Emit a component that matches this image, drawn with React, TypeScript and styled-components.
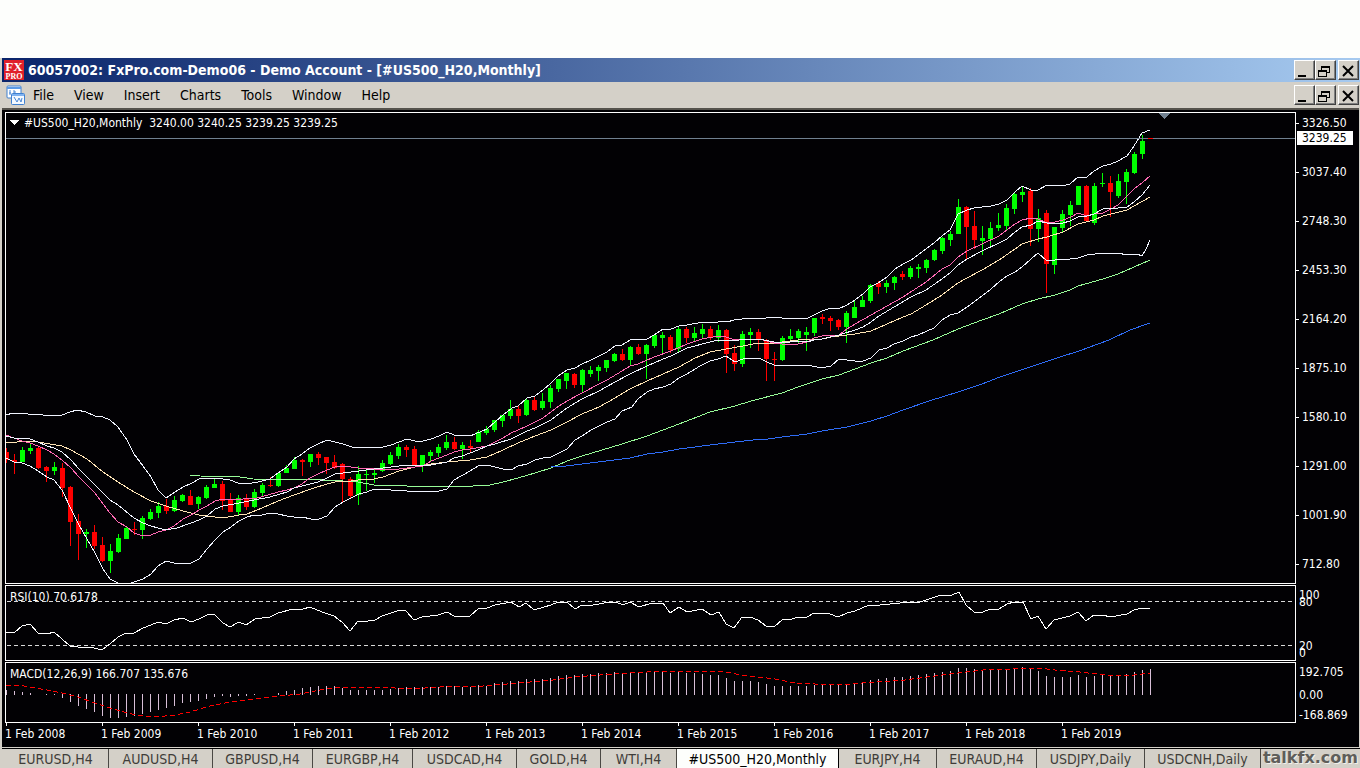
import React from "react";
import styled, { createGlobalStyle } from "styled-components";

const UI_FONT = '"DejaVu Sans Condensed", "Noto Sans", sans-serif';

const GlobalStyle = createGlobalStyle`
  * { box-sizing: border-box; }
  body { margin: 0; background: #fdfefc; font-family: ${UI_FONT}; font-size: 14px; }
  ul, ol, h1, p { margin: 0; padding: 0; list-style: none; }
`;

/* ---------- data ---------- */

const STEP = 8;
const FIRST_X = 6;

type Candle = [high: number, top: number, bottom: number, low: number, dir: 0 | 1];

const candles: Candle[] = [
  [448, 452, 460, 463, 0], [454, 460, 462, 474, 0], [447, 450, 462, 462, 1], [443, 448, 451, 454, 1],
  [446, 448, 468, 469, 0], [466, 467, 471, 482, 0], [462, 467, 471, 475, 1], [463, 468, 488, 497, 0],
  [486, 487, 522, 546, 0], [514, 521, 534, 560, 0], [529, 532, 534, 548, 1], [525, 532, 546, 549, 0],
  [537, 545, 561, 562, 0], [544, 551, 561, 573, 1], [534, 538, 552, 553, 1], [526, 528, 539, 539, 1],
  [522, 529, 530, 535, 0], [516, 518, 530, 539, 1], [509, 512, 519, 520, 1], [502, 506, 513, 518, 1],
  [499, 506, 511, 514, 0], [496, 500, 511, 512, 1], [494, 495, 501, 502, 1], [490, 496, 505, 505, 0],
  [496, 497, 504, 509, 1], [485, 487, 498, 499, 1], [479, 484, 488, 488, 1], [481, 484, 501, 510, 0],
  [493, 500, 512, 512, 0], [495, 498, 512, 515, 1], [494, 498, 507, 510, 0], [489, 492, 507, 508, 1],
  [483, 485, 493, 496, 1], [477, 485, 486, 487, 0], [472, 473, 486, 487, 1], [465, 468, 473, 473, 1],
  [457, 460, 469, 469, 1], [459, 460, 462, 476, 0], [454, 454, 462, 467, 1], [452, 454, 458, 465, 0],
  [457, 457, 463, 474, 0], [455, 462, 468, 469, 0], [463, 464, 479, 503, 0], [477, 479, 496, 498, 0],
  [466, 474, 495, 505, 1], [469, 474, 475, 491, 1], [469, 473, 475, 483, 1], [460, 463, 471, 472, 1],
  [452, 455, 464, 465, 1], [444, 447, 456, 459, 1], [445, 447, 450, 457, 0], [446, 449, 465, 466, 0],
  [455, 455, 466, 472, 1], [450, 452, 456, 461, 1], [444, 447, 453, 457, 1], [435, 442, 448, 450, 1],
  [437, 442, 449, 450, 0], [442, 445, 449, 459, 1], [440, 446, 448, 452, 0], [430, 432, 442, 442, 1],
  [426, 429, 433, 435, 1], [420, 420, 430, 432, 1], [415, 415, 421, 427, 1], [400, 409, 416, 419, 1],
  [406, 409, 416, 423, 0], [398, 400, 415, 416, 1], [396, 400, 410, 411, 0], [393, 401, 408, 410, 1],
  [385, 388, 402, 408, 1], [379, 379, 389, 392, 1], [373, 373, 381, 389, 1], [373, 374, 385, 388, 0],
  [369, 370, 385, 393, 1], [366, 370, 374, 377, 1], [365, 367, 371, 381, 1], [360, 360, 368, 372, 1],
  [353, 354, 361, 362, 1], [349, 354, 360, 361, 0], [346, 347, 360, 366, 1], [344, 347, 354, 355, 0],
  [344, 345, 354, 379, 1], [334, 335, 346, 348, 1], [332, 335, 338, 353, 1], [335, 337, 350, 353, 0],
  [327, 329, 349, 352, 1], [327, 329, 338, 343, 0], [327, 333, 338, 342, 1], [324, 329, 334, 338, 1],
  [326, 329, 338, 340, 0], [325, 330, 338, 342, 1], [329, 330, 354, 373, 0], [345, 353, 364, 371, 0],
  [331, 334, 364, 367, 1], [328, 332, 335, 348, 1], [329, 332, 339, 351, 0], [339, 340, 359, 381, 0],
  [352, 359, 360, 381, 0], [336, 338, 360, 361, 1], [329, 336, 339, 342, 1], [329, 331, 338, 344, 1],
  [327, 332, 335, 351, 1], [318, 318, 333, 336, 1], [314, 317, 319, 324, 0], [316, 318, 321, 331, 0],
  [319, 320, 327, 330, 0], [311, 313, 327, 343, 1], [301, 307, 318, 318, 1], [296, 300, 307, 307, 1],
  [284, 285, 301, 303, 1], [281, 283, 287, 294, 0], [280, 283, 287, 293, 1], [276, 277, 283, 290, 1],
  [271, 274, 277, 280, 0], [266, 268, 277, 279, 1], [264, 267, 269, 278, 1], [259, 260, 268, 273, 1],
  [249, 250, 260, 261, 1], [237, 238, 251, 254, 1], [231, 234, 240, 246, 1], [199, 207, 234, 234, 1],
  [206, 207, 227, 259, 0], [211, 226, 240, 249, 0], [226, 238, 241, 255, 1], [222, 228, 239, 247, 1],
  [213, 225, 228, 231, 1], [204, 208, 226, 230, 1], [193, 194, 209, 214, 1], [187, 192, 195, 202, 1],
  [188, 191, 229, 246, 0], [209, 218, 229, 242, 1], [210, 213, 264, 293, 0], [227, 227, 265, 274, 1],
  [210, 214, 228, 233, 1], [201, 205, 215, 226, 1], [186, 186, 205, 205, 1], [185, 186, 221, 222, 0],
  [183, 186, 223, 225, 1], [173, 183, 184, 187, 1], [176, 183, 192, 217, 0], [174, 181, 196, 198, 1],
  [169, 172, 182, 204, 1], [152, 154, 173, 174, 1], [135, 141, 154, 159, 1], [138, 138, 139, 139, 0],
];

const upperBand = "6,415 13,413 25,413 28,414 43,415 55,416 62,415 70,412 77,410 86,412 95,416 103,417 110,420 118,427 127,440 134,454 143,466 151,477 158,490 166,498 175,492 183,487 192,483 199,479 207,478 215,478 223,479 230,480 238,483 247,484 258,482 270,479 278,473 287,467 294,459 302,454 310,448 318,444 327,440 335,442 343,444 352,447 367,447 374,448 383,447 391,445 399,442 407,439 415,441 423,441 431,439 439,436 447,432 454,435 470,436 475,434 487,429 495,422 503,415 512,408 518,406 527,398 535,396 543,390 550,384 558,376 567,370 575,368 582,364 591,360 599,356 607,352 615,346 622,345 630,340 647,339 654,335 663,329 671,329 679,326 687,325 698,323 710,322 718,322 721,321 727,322 734,320 751,318 758,319 774,317 782,318 798,318 806,319 814,315 822,311 831,308 838,309 847,305 855,300 863,294 870,287 878,283 887,277 895,269 903,264 911,260 918,255 926,249 934,243 942,236 950,230 958,214 967,210 974,208 982,207 991,206 999,204 1007,200 1015,192 1022,186 1031,190 1038,190 1047,185 1062,186 1070,184 1078,177 1087,177 1094,171 1103,166 1111,164 1118,161 1127,156 1134,146 1142,133 1150,130";
const lowerBand = "6,458 14,462 22,463 30,466 38,471 47,477 54,480 62,490 71,509 79,525 87,539 95,553 103,569 110,579 118,583 131,583 143,579 151,574 158,566 166,561 174,563 183,564 191,563 199,559 207,549 215,540 223,532 231,527 239,521 247,517 254,515 262,515 270,513 278,514 287,516 294,517 302,517 311,519 319,519 327,516 335,507 343,502 351,498 359,494 367,492 374,489 391,490 407,491 439,491 447,489 454,480 463,475 470,471 478,466 487,465 495,467 503,469 511,470 518,466 527,464 535,460 543,458 551,457 559,453 567,449 575,440 582,436 591,430 599,426 607,422 615,419 622,411 632,407 638,399 647,392 654,389 663,387 671,384 679,378 687,374 700,366 710,361 718,359 726,356 735,362 743,359 751,358 759,358 767,362 774,365 807,365 822,368 831,366 839,359 855,361 863,361 871,358 879,350 887,348 894,344 903,341 911,337 918,335 934,328 942,320 950,315 958,313 967,307 974,302 982,296 991,289 999,282 1007,276 1015,272 1022,267 1031,259 1038,253 1047,261 1055,260 1070,259 1078,258 1087,255 1103,253 1118,253 1127,255 1137,254 1142,256 1146,249 1150,240";
const fastAverage = "6,435 14,438 22,441 30,443 38,446 47,450 54,454 62,460 71,468 79,477 87,485 95,493 103,504 110,513 118,522 127,527 134,533 143,536 151,535 158,532 166,530 174,526 183,519 191,515 199,510 207,506 215,501 223,499 243,499 257,498 268,495 278,492 287,490 294,488 302,484 310,478 318,474 327,470 335,467 343,466 358,468 374,469 391,470 407,468 415,467 423,466 431,461 439,458 447,455 454,452 462,450 470,449 487,446 503,438 511,433 518,430 527,426 543,418 551,412 559,406 567,401 582,393 599,384 607,380 622,371 630,366 638,364 654,357 671,351 687,344 702,339 718,336 726,337 735,340 743,339 751,339 759,339 767,341 774,343 782,344 798,344 807,342 814,338 822,336 839,335 847,329 855,324 871,315 887,306 903,297 926,282 942,269 950,265 958,257 967,251 982,244 999,236 1007,230 1015,224 1022,220 1031,218 1038,219 1047,223 1055,222 1063,220 1071,217 1078,213 1087,216 1094,214 1103,213 1111,209 1118,205 1127,196 1134,189 1142,183 1150,176";
const middleBand = "6,436 14,438 30,439 38,442 47,446 54,448 62,452 71,460 79,469 95,485 110,500 118,505 134,518 143,523 151,526 158,528 166,530 177,528 191,523 199,520 207,516 215,509 223,506 239,503 254,500 270,497 287,492 294,488 302,486 318,482 327,478 335,474 343,473 359,471 374,469 383,468 407,465 415,466 431,465 447,462 454,458 462,456 470,453 478,450 487,446 495,444 511,439 527,431 535,428 543,424 551,420 559,414 567,408 582,399 599,391 615,382 630,374 647,366 663,359 671,356 687,348 710,342 718,340 726,340 735,341 743,339 759,339 774,342 790,342 798,341 807,342 814,340 822,339 839,335 855,330 863,327 871,322 879,316 894,307 911,297 926,290 942,279 950,273 958,265 967,259 982,251 999,243 1007,239 1015,232 1022,227 1031,225 1038,221 1047,223 1063,223 1070,221 1078,217 1087,216 1094,214 1103,209 1118,208 1127,207 1134,202 1142,195 1150,185";
const slowAverage = "6,443 17,442 27,441 38,442 62,446 71,450 87,459 103,472 118,482 134,492 151,501 166,506 183,511 199,515 223,518 239,515 247,514 262,508 278,501 294,495 311,489 327,484 335,482 351,481 358,480 374,479 383,477 399,471 415,467 431,464 447,462 470,460 487,457 503,450 518,443 535,436 551,430 567,422 582,414 599,407 615,398 630,389 647,381 663,374 679,367 695,358 710,352 726,349 743,346 758,343 774,343 790,341 807,339 822,339 831,337 847,335 855,334 871,331 887,324 903,317 911,314 926,305 942,295 958,283 967,278 982,270 999,260 1015,249 1022,244 1038,239 1047,237 1063,232 1078,224 1094,220 1103,216 1127,210 1134,206 1150,197";
const yearlyAverage = "190,475 200,476 240,477 253,479 323,480 343,481 358,482 374,485 407,486 430,487 447,486 473,486 490,485 503,482 518,478 535,473 551,468 567,461 582,456 622,444 647,436 679,424 710,412 735,406 751,401 782,393 798,387 822,379 839,375 871,363 887,358 903,351 933,340 958,329 982,320 999,314 1022,304 1038,299 1055,295 1070,290 1078,286 1103,279 1118,274 1134,267 1150,260";
const longAverage = "551,467 566,466 590,463 614,460 630,458 647,454 663,452 679,449 695,447 710,445 735,442 753,440 768,439 782,437 807,434 822,431 847,427 871,421 887,416 903,410 929,401 958,392 982,384 1000,377 1030,367 1060,357 1079,351 1109,340 1130,330 1150,323";

const rsiLine = "6,632 14,633 22,626 30,624 38,633 47,634 54,632 62,639 70,646 78,647 90,647 102,650 110,644 118,637 126,633 134,633 143,628 151,625 158,622 166,624 174,620 183,618 191,622 199,619 207,615 214,614 223,623 230,627 239,622 246,625 255,619 270,617 278,613 293,609 303,609 310,607 322,612 334,616 342,622 350,631 358,621 368,621 375,620 382,616 400,610 406,611 414,620 422,617 438,615 447,612 454,616 470,616 478,609 487,608 495,605 511,602 519,607 526,603 534,610 551,605 558,602 567,602 575,609 582,605 593,605 610,602 616,602 623,605 630,602 639,607 652,603 663,603 670,613 679,607 687,612 702,609 711,615 719,612 726,624 734,628 742,617 750,617 758,620 766,626 774,627 783,619 792,619 798,617 807,617 814,613 830,614 838,617 847,613 855,611 869,605 880,605 900,603 908,602 920,602 938,596 952,595 959,592 966,605 974,612 983,612 990,609 999,609 1007,604 1014,602 1023,602 1031,619 1038,616 1046,629 1054,620 1070,616 1078,612 1086,621 1094,615 1103,615 1110,617 1127,614 1134,610 1142,608 1150,608";
const macdSignal = "6,685 17,685 30,687 47,690 62,693 78,697 95,703 110,708 127,713 143,716 155,717 175,715 190,712 210,706 230,702 255,699 280,696 300,694 320,690 340,687 380,687 395,688 425,688 455,686 483,686 507,684 530,682 553,680 575,677 600,675 630,673 665,671 700,671 725,672 742,675 758,677 775,679 795,683 815,684 850,684 875,682 905,680 920,678 950,674 983,670 1012,669 1038,668 1055,670 1080,672 1105,675 1127,676 1142,674 1150,673";
const macdBars = [
  690, 691, 692, 693, 695, 694, 696, 699, 703, 707, 710, 713, 717, 719, 719, 718, 717, 715, 713, 711,
  709, 707, 704, 703, 702, 700, 698, 697, 698, 697, 697, 696, 695, 695, 693, 691, 690, 688, 687, 686,
  686, 686, 688, 690, 690, 690, 690, 690, 689, 688, 687, 687, 687, 687, 687, 686, 686, 687, 687, 685,
  686, 683, 682, 681, 681, 679, 679, 679, 678, 676, 675, 675, 674, 674, 673, 673, 672, 673, 672, 672,
  672, 672, 672, 673, 672, 673, 673, 674, 675, 675, 678, 681, 681, 681, 682, 684, 686, 686, 686, 686,
  686, 685, 685, 685, 685, 685, 683, 682, 680, 679, 678, 677, 677, 676, 675, 674, 673, 672, 671, 668,
  668, 669, 670, 670, 670, 669, 668, 667, 669, 671, 676, 677, 677, 677, 675, 677, 676, 675, 676, 676,
  674, 672, 670, 669,
];

const menuItems = ["File", "View", "Insert", "Charts", "Tools", "Window", "Help"];
const priceLabels = ["3326.50", "3037.40", "2748.30", "2453.30", "2164.20", "1875.10", "1580.10", "1291.00", "1001.90", "712.80"];
const years = [2008, 2009, 2010, 2011, 2012, 2013, 2014, 2015, 2016, 2017, 2018, 2019];
const tabs = [
  { name: "EURUSD,H4", width: 106 },
  { name: "AUDUSD,H4", width: 104 },
  { name: "GBPUSD,H4", width: 100 },
  { name: "EURGBP,H4", width: 100 },
  { name: "USDCAD,H4", width: 104 },
  { name: "GOLD,H4", width: 84 },
  { name: "WTI,H4", width: 76 },
  { name: "#US500_H20,Monthly", width: 162, active: true },
  { name: "EURJPY,H4", width: 98 },
  { name: "EURAUD,H4", width: 100 },
  { name: "USDJPY,Daily", width: 108 },
  { name: "USDCNH,Daily", width: 116 },
];

/* ---------- window chrome ---------- */

const Desktop = styled.div`
  min-height: 100vh;
  padding-top: 58px;
  display: flex;
  flex-direction: column;
  overflow: hidden;
`;

const Window = styled.main`
  flex: 1;
  display: flex;
  flex-direction: column;
  padding-left: 2px;
  background: #d4d0c8;
`;

const Bar = styled.header`
  display: flex;
  align-items: center;
  height: 26px;
  padding: 0 1px 0 4px;
`;

const TitleBar = styled(Bar)`
  height: 24px;
  padding-left: 2px;
  background: linear-gradient(to right, #0a246a, #a6caf0);
  color: #fff;
`;

const Title = styled.h1`
  flex: 1;
  margin-left: 4px;
  font-size: 14px;
  line-height: 24px;
  font-weight: bold;
  white-space: nowrap;
`;

const Menu = styled.ul`
  flex: 1;
  display: flex;
  margin-left: -3px;
`;

const MenuButton = styled.button`
  height: 24px;
  padding: 0 10px;
  border: 0;
  background: none;
  color: #000;
  font: 14px/24px ${UI_FONT};
`;

const Controls = styled.div`
  display: flex;
`;

const ControlButton = styled.button<{ $gap?: boolean }>`
  width: 21px;
  height: 20px;
  margin-left: ${(p) => (p.$gap ? "2px" : "0")};
  padding: 0;
  border: 1px solid;
  border-color: #fff #404040 #404040 #fff;
  box-shadow: inset -1px -1px 0 #808080;
  background: #d4d0c8;

  svg { display: block; }
`;

/* ---------- chart workspace ---------- */

const Workspace = styled.section`
  display: flex;
  flex-direction: column;
  margin-right: 1px;
  padding: 2px 0 0 3px;
  border-top: 2px solid #55524c;
  background: #020104;
  color: #fff;
  font-size: 12px;
`;

const PanelRow = styled.div`
  display: flex;
  margin-bottom: 1px;
`;

const Panel = styled.div<{ $height: number }>`
  position: relative;
  flex: 1;
  min-width: 0;
  height: ${(p) => p.$height}px;
  border: 1px solid #fff;
  overflow: hidden;

  svg { display: block; }
`;

const PanelLabel = styled.p`
  position: absolute;
  top: 3px;
  left: 4px;
  line-height: 16px;
  white-space: pre;
`;

const SymbolLabel = styled(PanelLabel)`
  top: 2px;
  left: 18px;
`;

const Scale = styled.ul`
  position: relative;
  width: 63px;
  line-height: 14px;
`;

const PriceTick = styled.li`
  display: flex;
  align-items: center;
  height: 14px;
  margin: 4px 0 35px;

  &::before {
    content: "";
    width: 3px;
    height: 1px;
    margin-right: 3px;
    background: #fff;
  }
  &:last-child { margin-bottom: 0; }
`;

const LastPrice = styled.li`
  position: absolute;
  top: 19px;
  left: 1px;
  width: 56px;
  padding-left: 5px;
  background: #fff;
  color: #000;
`;

const ScaleLabel = styled.li<{ $top: number }>`
  position: absolute;
  top: ${(p) => p.$top}px;
  left: 3px;
`;

const TimeScale = styled.ol`
  display: flex;
  height: 24px;
  margin-top: -1px;
  overflow: hidden;
`;

const TimeLabel = styled.li`
  position: relative;
  flex: 0 0 96px;
  line-height: 22px;
  white-space: nowrap;

  &::before {
    content: "";
    position: absolute;
    top: 0;
    left: 1px;
    width: 1px;
    height: 3px;
    background: #fff;
  }
`;

/* ---------- tabs ---------- */

const Footer = styled.footer`
  position: relative;
  flex: 1;
  display: flex;
`;

const TabStrip = styled.nav`
  flex: 1;
  display: flex;
  margin-top: 1px;
  padding-left: 1px;
  border-top: 1px solid #000;
  overflow: hidden;
`;

const Tab = styled.button<{ $width: number; $active?: boolean }>`
  flex: 0 0 ${(p) => p.$width}px;
  height: 20px;
  padding: 0;
  border: 0;
  border-right: 1px solid ${(p) => (p.$active ? "#000" : "#4a4844")};
  background: ${(p) => (p.$active ? "#fdfefc" : "transparent")};
  color: ${(p) => (p.$active ? "#000" : "#3f3d39")};
  font: 14px/20px ${UI_FONT};
  white-space: nowrap;
`;

const Watermark = styled.p`
  position: absolute;
  right: 2px;
  bottom: 1px;
  color: #5f5e5a;
  font: bold 16px/20px "DejaVu Sans", sans-serif;
  text-shadow: 1px 1px 0 #f2f0ea;
`;

/* ---------- icons ---------- */

const BrandIcon = () => (
  <svg width="20" height="20" viewBox="0 0 20 20" aria-hidden="true">
    <rect width="20" height="20" fill="#e0202a" />
    <g fill="#fff" fontFamily="Liberation Serif, serif" fontWeight="bold" textAnchor="middle">
      <text x="10" y="11" fontSize="13">FX</text>
      <text x="10" y="19" fontSize="8">PRO</text>
    </g>
  </svg>
);

const ChartsIcon = () => (
  <svg width="20" height="20" viewBox="0 0 20 20" aria-hidden="true">
    <rect x="1" y="1" width="14" height="12" rx="1" fill="#fff" stroke="#3f80d0" />
    <path d="M1 2h14v2H1z" fill="#5d9be6" />
    <path d="M4 5v5M3 8h2M8 5v4M8 7h2" stroke="#4a88d6" fill="none" />
    <rect x="5.500" y="8.500" width="13" height="11" rx="1" fill="#f4f9ff" stroke="#3f80d0" />
    <path d="M6 9h12v2H6z" fill="#7fb2f0" />
    <path d="M8 12l3 5 2-4 2 4 1-4" stroke="#4a88d6" fill="none" />
  </svg>
);

const MinimizeIcon = () => (
  <svg width="18" height="17" aria-hidden="true"><path d="M3 13h8v2H3z" /></svg>
);

const RestoreIcon = () => (
  <svg width="18" height="17" aria-hidden="true" fill="none" stroke="#000" shapeRendering="crispEdges">
    <path d="M5.500 8V4.500h8v6H11M5 5.500h9" />
    <path d="M2.500 8.500h8v6h-8zM2 9.500h9" />
  </svg>
);

const CloseIcon = () => (
  <svg width="18" height="17" aria-hidden="true" stroke="#000" strokeWidth="2"><path d="M4 4l10 10M14 4L4 14" /></svg>
);

const WindowControls = () => (
  <Controls>
    <ControlButton aria-label="Minimize"><MinimizeIcon /></ControlButton>
    <ControlButton aria-label="Restore"><RestoreIcon /></ControlButton>
    <ControlButton aria-label="Close" $gap><CloseIcon /></ControlButton>
  </Controls>
);

/* ---------- drawings ---------- */

const Curve = ({ points, color, dash }: { points: string; color: string; dash?: string }) => (
  <polyline points={points} fill="none" stroke={color} strokeDasharray={dash} />
);

const PriceChart = () => (
  <svg width="100%" height="470" shapeRendering="crispEdges" aria-label="Monthly candles">
    <g transform="translate(-6 -113)">
      {candles.map(([high, top, bottom, low, up], i) => {
        const x = FIRST_X + i * STEP;
        const fill = up ? "#00ff00" : "#ff0000";
        return (
          <g key={i} fill={fill}>
            <rect x={x} y={high} width={1} height={low - high} />
            <rect x={x - 2} y={top} width={5} height={Math.max(1, bottom - top)} />
          </g>
        );
      })}
      <Curve points={yearlyAverage} color="#98fb98" />
      <Curve points={longAverage} color="#2f6cf6" />
      <Curve points={slowAverage} color="#ffe4b5" />
      <Curve points={fastAverage} color="#ff69b4" />
      <Curve points={middleBand} color="#f0f4ff" />
      <Curve points={upperBand} color="#f0f4ff" />
      <Curve points={lowerBand} color="#f0f4ff" />
      <path d="M1158 113h12l-6 6z" fill="#708090" />
      <path d="M9 120h10l-5 5z" fill="#fff" />
    </g>
    <rect y="25" width="100%" height="1" fill="#708090" />
    <rect x="1142" y="25" width="5" height="1" fill="#ff0000" />
  </svg>
);

const RsiChart = () => (
  <svg width="100%" height="74" shapeRendering="crispEdges" aria-label="RSI">
    <g stroke="#d8d8d8" strokeDasharray="4 3">
      <line x1="1" x2="100%" y1="15" y2="15" />
      <line x1="1" x2="100%" y1="59" y2="59" />
    </g>
    <g transform="translate(-6 -586)"><Curve points={rsiLine} color="#fff" /></g>
  </svg>
);

const MacdChart = () => (
  <svg width="100%" height="59" shapeRendering="crispEdges" aria-label="MACD">
    <g transform="translate(-6 -663)">
      {macdBars.map((y, i) => (
        <rect key={i} x={FIRST_X + i * STEP} y={Math.min(y, 694)} width={1} height={Math.abs(695 - y)} fill="#d8bfd8" />
      ))}
      <Curve points={macdSignal} color="#ff0000" dash="5 3" />
    </g>
  </svg>
);

export default function App() {
  return (
    <Desktop>
      <GlobalStyle />
      <Window>
        <TitleBar>
          <BrandIcon />
          <Title>60057002: FxPro.com-Demo06 - Demo Account - [#US500_H20,Monthly]</Title>
          <WindowControls />
        </TitleBar>
        <Bar as="nav">
          <ChartsIcon />
          <Menu>
            {menuItems.map((item) => (
              <li key={item}><MenuButton>{item}</MenuButton></li>
            ))}
          </Menu>
          <WindowControls />
        </Bar>
        <Workspace>
          <PanelRow>
            <Panel $height={472}>
              <PriceChart />
              <SymbolLabel>{"#US500_H20,Monthly  3240.00 3240.25 3239.25 3239.25"}</SymbolLabel>
            </Panel>
            <Scale>
              <LastPrice>3239.25</LastPrice>
              {priceLabels.map((label) => <PriceTick key={label}>{label}</PriceTick>)}
            </Scale>
          </PanelRow>
          <PanelRow>
            <Panel $height={76}>
              <RsiChart />
              <PanelLabel>RSI(10) 70.6178</PanelLabel>
            </Panel>
            <Scale>
              <ScaleLabel $top={3}>100</ScaleLabel>
              <ScaleLabel $top={10}>80</ScaleLabel>
              <ScaleLabel $top={54}>20</ScaleLabel>
              <ScaleLabel $top={61}>0</ScaleLabel>
            </Scale>
          </PanelRow>
          <PanelRow>
            <Panel $height={61}>
              <MacdChart />
              <PanelLabel>MACD(12,26,9) 166.707 135.676</PanelLabel>
            </Panel>
            <Scale>
              <ScaleLabel $top={3}>192.705</ScaleLabel>
              <ScaleLabel $top={26}>0.00</ScaleLabel>
              <ScaleLabel $top={46}>-168.869</ScaleLabel>
            </Scale>
          </PanelRow>
          <TimeScale>
            {years.map((year) => <TimeLabel key={year}>1 Feb {year}</TimeLabel>)}
          </TimeScale>
        </Workspace>
        <Footer>
          <TabStrip>
            {tabs.map((tab) => (
              <Tab key={tab.name} $width={tab.width} $active={tab.active}>{tab.name}</Tab>
            ))}
          </TabStrip>
          <Watermark>talkfx.com</Watermark>
        </Footer>
      </Window>
    </Desktop>
  );
}
